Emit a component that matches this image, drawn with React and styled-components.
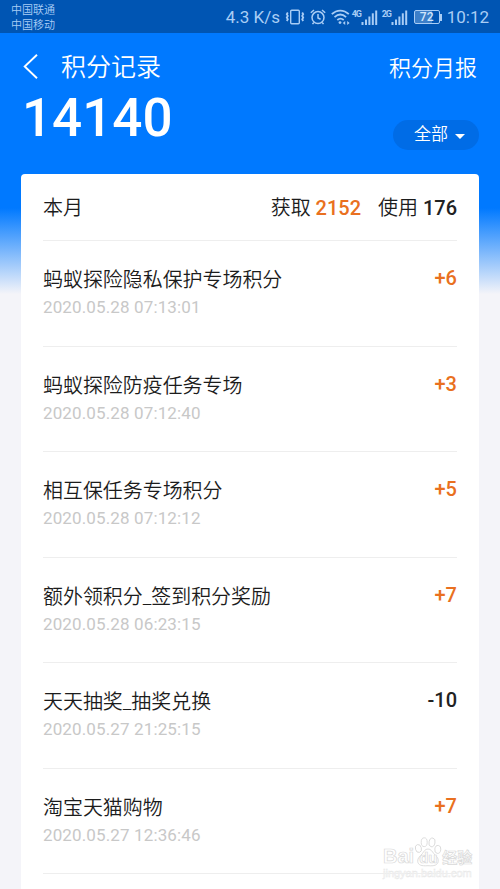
import styled, { createGlobalStyle } from "styled-components";

const records = [
  { id: 1, title: "蚂蚁探险隐私保护专场积分", date: "2020.05.28 07:13:01", points: 6 },
  { id: 2, title: "蚂蚁探险防疫任务专场", date: "2020.05.28 07:12:40", points: 3 },
  { id: 3, title: "相互保任务专场积分", date: "2020.05.28 07:12:12", points: 5 },
  { id: 4, title: "额外领积分_签到积分奖励", date: "2020.05.28 06:23:15", points: 7 },
  { id: 5, title: "天天抽奖_抽奖兑换", date: "2020.05.27 21:25:15", points: -10 },
  { id: 6, title: "淘宝天猫购物", date: "2020.05.27 12:36:46", points: 7 },
];

const formatPoints = (points) => (points > 0 ? `+${points}` : `${points}`);

function VibrateIcon() {
  return (
    <svg width="20" height="16" viewBox="0 0 20 16" fill="none" stroke="currentColor">
      <rect x="5.7" y="1.2" width="8.6" height="13.6" rx="1" strokeWidth="1.4" />
      <path d="M2.8 3.5l-1 1.7 1 1.7-1 1.7 1 1.7-1 1.7M17.2 3.5l1 1.7-1 1.7 1 1.7-1 1.7 1 1.7" strokeWidth="1.8" />
    </svg>
  );
}

function AlarmIcon() {
  return (
    <svg width="16" height="16" viewBox="0 0 16 16" fill="none" stroke="currentColor" strokeWidth="1.5">
      <circle cx="8" cy="8.6" r="6" />
      <path d="M8 5v4l2.6 1.2M.8 3.8L4 1M15.2 3.8L12 1M3.8 13.5l-1.3 1.6M12.2 13.5l1.3 1.6" />
    </svg>
  );
}

function WifiIcon() {
  return (
    <svg width="19" height="16" viewBox="0 0 19 16" fill="none" stroke="currentColor" strokeWidth="1.8">
      <path d="M.8 5.2C5.8.4 12.8.4 17.8 5.2M3.5 8.2c3.6-3.3 8-3.3 11.6 0M6.3 11c2-1.7 4.400-1.7 6.4 0" />
      <circle cx="9" cy="13.6" r="1.4" fill="currentColor" stroke="none" />
      <path d="M11.800 13.900l2.400-2v4zM18.600 13.900l-2.400-2v4z" fill="currentColor" stroke="none" />
    </svg>
  );
}

function SignalIcon() {
  return (
    <svg width="17" height="15" viewBox="0 0 17 15" fill="currentColor">
      <rect x="0.5" y="12" width="2" height="3" />
      <rect x="4" y="9.5" width="2" height="5.5" />
      <rect x="7.4" y="6.5" width="2" height="8.5" />
      <rect x="10.8" y="3.3" width="2" height="11.7" />
      <rect x="14.2" y="0.5" width="2" height="14.5" />
    </svg>
  );
}

function PawIcon() {
  return (
    <svg width="28" height="30" viewBox="0 0 28 30" fill="#fff" stroke="#d9d9d9" strokeWidth="0.9">
      <ellipse cx="4.4" cy="11.5" rx="3" ry="4" transform="rotate(-15 4.4 11.5)" />
      <ellipse cx="10.2" cy="5.2" rx="3" ry="4.4" />
      <ellipse cx="18" cy="5.4" rx="3" ry="4.4" transform="rotate(12 18 5.4)" />
      <ellipse cx="23.8" cy="12.4" rx="3" ry="4" transform="rotate(8 23.8 12.4)" />
      <path d="M14 12c3 0 4 2.4 6 4.8 2.4 2.6 4.6 4 4.2 7.4-.4 4-4 5-10.2 4.5C7.5 29.2 4 28.2 3.7 24.2 3.5 20.8 6.3 19.2 8.3 16.7 10 14.4 11 12 14 12z" />
    </svg>
  );
}

export default function App() {
  return (
    <Screen>
      <GlobalStyle />
      <StatusBar>
        <Carriers>
          <span>中国联通</span>
          <span>中国移动</span>
        </Carriers>
        <StatusIcons>
          <Speed>4.3 K/s</Speed>
          <VibrateIcon />
          <AlarmIcon />
          <WifiIcon />
          <Network>
            <b>4G</b>
            <SignalIcon />
          </Network>
          <Network $spaced>
            <b>2G</b>
            <SignalIcon />
          </Network>
          <Battery>
            <BatteryBody>72</BatteryBody>
            <BatteryTip />
          </Battery>
          <Clock>10:12</Clock>
        </StatusIcons>
      </StatusBar>

      <Header>
        <TitleRow>
          <svg width="15" height="25" viewBox="0 0 15 25" fill="none" stroke="#fff" strokeWidth="1.9">
            <path d="M14 .8L1.7 12.5 14 24.2" />
          </svg>
          <PageTitle>积分记录</PageTitle>
          <ReportLink>积分月报</ReportLink>
        </TitleRow>
        <TotalRow>
          <Total>14140</Total>
          <Filter>
            <span>全部</span>
            <Caret />
          </Filter>
        </TotalRow>
      </Header>

      <Card>
        <Summary>
          <Month>本月</Month>
          <Stat>
            获取 <Value $earned>2152</Value>
          </Stat>
          <Stat>
            使用 <Value>176</Value>
          </Stat>
        </Summary>
        {records.map(({ id, title, date, points }) => (
          <Record key={id}>
            <div>
              <RecordTitle>{title}</RecordTitle>
              <RecordDate>{date}</RecordDate>
            </div>
            <Points $earned={points > 0}>{formatPoints(points)}</Points>
          </Record>
        ))}
      </Card>

      <Watermark>
        <Brand>
          <span>Bai</span>
          <Paw>
            <PawIcon />
            <PawText>du</PawText>
          </Paw>
          <BrandName>经验</BrandName>
        </Brand>
        <Site>jingyan.baidu.com</Site>
      </Watermark>
    </Screen>
  );
}

const GlobalStyle = createGlobalStyle`
  * {
    box-sizing: border-box;
  }

  body {
    margin: 0;
    overflow: hidden;
  }
`;

const Screen = styled.div`
  position: relative;
  width: 500px;
  height: 889px;
  overflow: hidden;
  font-family: Roboto, "Noto Sans CJK SC", sans-serif;
  color: #1c1c1c;
  background: linear-gradient(#0079ff 208px, #f4f4f9 294px);
`;

const StatusBar = styled.div`
  height: 33px;
  padding: 0 11px;
  display: flex;
  justify-content: space-between;
  align-items: center;
  color: #a9cdf5;
  background: #0055b3;
`;

const Carriers = styled.div`
  display: flex;
  flex-direction: column;
  font-size: 11px;
  line-height: 15px;
  font-weight: 350;
  padding-top: 3px;
`;

const StatusIcons = styled.div`
  display: flex;
  align-items: center;
  padding-top: 1px;

  svg {
    display: block;
    flex-shrink: 0;
  }

  svg + svg {
    margin-left: 5px;
  }
`;

const Speed = styled.span`
  width: 59px;
  font-size: 17px;
  line-height: 20px;
  white-space: nowrap;
`;

const Network = styled.span`
  display: flex;
  margin-left: ${({ $spaced }) => ($spaced ? "4px" : "2px")};

  b {
    width: 9px;
    font-family: Roboto, sans-serif;
    font-size: 9px;
    line-height: 8px;
    letter-spacing: -1px;
  }
`;

const Battery = styled.span`
  display: flex;
  align-items: center;
  margin-left: 6px;
`;

const BatteryBody = styled.span`
  width: 26px;
  height: 14px;
  border: 1px solid #a9cdf5;
  border-radius: 2px;
  font-size: 12px;
  line-height: 12px;
  font-weight: 500;
  text-align: center;
  color: #d3e6fb;
  background: linear-gradient(90deg, #3c7fc9 72%, transparent 72%);
`;

const BatteryTip = styled.span`
  width: 2px;
  height: 7px;
  background: #a9cdf5;
`;

const Clock = styled.span`
  margin-left: 5px;
  font-size: 17px;
  line-height: 20px;
`;

const Header = styled.div`
  height: 141px;
  padding: 15px 22px 0 23px;
  color: #ffffff;
`;

const TitleRow = styled.div`
  height: 37px;
  display: flex;
  align-items: center;
`;

const PageTitle = styled.h1`
  flex: 1;
  margin: 3px 0 0 23px;
  font-size: 25px;
  font-weight: 350;
  line-height: 36px;
`;

const ReportLink = styled.span`
  padding: 4px 1px 0 0;
  font-size: 22px;
  font-weight: 350;
  line-height: 36px;
`;

const TotalRow = styled.div`
  display: flex;
  justify-content: space-between;
  margin-right: -1px;
`;

const Total = styled.div`
  margin: 1px 0 0 -1px;
  font-size: 53px;
  font-weight: 500;
  line-height: 65px;
`;

const Filter = styled.div`
  width: 86px;
  height: 30px;
  margin-top: 35px;
  padding-left: 21px;
  display: flex;
  align-items: center;
  gap: 7px;
  border-radius: 15px;
  font-size: 17px;
  font-weight: 350;
  background: #006ce6;

  span {
    padding-bottom: 5px;
  }
`;

const Caret = styled.i`
  margin-top: 2px;
  border: 5px solid transparent;
  border-top-color: #ffffff;
  border-bottom: 0;
`;

const Card = styled.div`
  width: 458px;
  height: 760px;
  margin: 0 auto;
  padding: 0 22px;
  border-radius: 4px;
  background: #ffffff;
`;

const Summary = styled.div`
  height: 67px;
  padding-bottom: 2px;
  display: flex;
  align-items: center;
  border-bottom: 1px solid #eeeeee;
  font-size: 20px;
`;

const Month = styled.span`
  flex: 1;
  font-weight: 350;
`;

const Stat = styled.span`
  margin-left: 17px;
  font-weight: 350;
`;

const Value = styled.span`
  font-weight: 500;
  color: ${({ $earned }) => ($earned ? "#e97020" : "#222222")};
`;

const Record = styled.div`
  height: 105.5px;
  padding-top: 24.4px;
  display: flex;
  justify-content: space-between;
  border-bottom: 1px solid #eeeeee;
`;

const RecordTitle = styled.div`
  font-size: 19.95px;
  font-weight: 350;
  line-height: 30px;
`;

const RecordDate = styled.div`
  font-size: 17px;
  line-height: 25px;
  letter-spacing: 0.13px;
  color: #c8c8c8;
`;

const Points = styled.div`
  font-size: 20px;
  font-weight: 500;
  line-height: 27px;
  color: ${({ $earned }) => ($earned ? "#e97020" : "#222222")};
`;

const Watermark = styled.div`
  position: absolute;
  right: 26px;
  bottom: 9px;
  width: 91px;
  color: #ffffff;
`;

const Brand = styled.div`
  display: flex;
  align-items: flex-end;
  font-family: "Liberation Sans", sans-serif;
  font-size: 20px;
  font-weight: 700;
  line-height: 21px;
  white-space: nowrap;
  -webkit-text-stroke: 0.7px #d9d9d9;
`;

const Paw = styled.span`
  position: relative;
  height: 30px;
  flex-shrink: 0;
`;

const PawText = styled.span`
  position: absolute;
  left: 5px;
  bottom: 1px;
  font-size: 15px;
  line-height: 16px;
`;

const BrandName = styled.span`
  font-family: "Noto Sans CJK SC", sans-serif;
  font-size: 15px;
`;

const Site = styled.div`
  font-family: "Liberation Sans", sans-serif;
  font-size: 11px;
  line-height: 13px;
  -webkit-text-stroke: 0.5px #e8e8e8;
`;
